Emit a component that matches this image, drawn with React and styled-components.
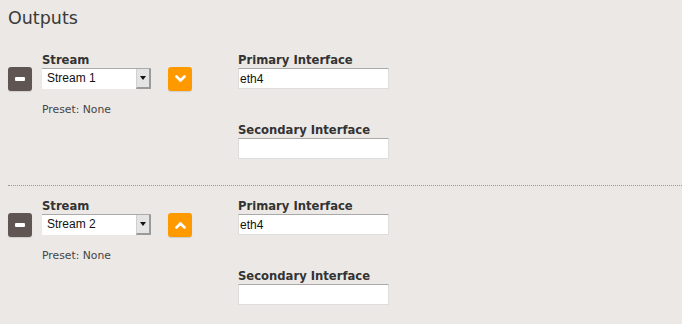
import styled, { createGlobalStyle } from "styled-components";

const GlobalStyle = createGlobalStyle`
  html, body {
    margin: 0;
    background: #ece8e6;
  }
  body {
    font-family: "DejaVu Sans", sans-serif;
    color: #333;
  }
`;

const Page = styled.div`
  padding: 6px 0 0 8px;
`;

const Title = styled.h2`
  margin: 0;
  font-size: 17.5px;
  line-height: 24px;
  font-weight: normal;
  color: #3a3a3a;
`;

const OutputRow = styled.div`
  display: flex;
  align-items: flex-start;
  padding: ${(p) => (p.$first ? "20px 0 26px" : "10px 0 25px")};
  border-top: ${(p) => (p.$first ? "none" : "1px dotted #999")};
`;

const IconButton = styled.button`
  width: 24px;
  height: 24px;
  margin-top: 17px;
  padding: 0;
  border: none;
  border-radius: 3px;
  background: ${(p) => p.$bg};
  box-shadow: 0 1px 1px rgba(0, 0, 0, 0.12);
  display: flex;
  align-items: center;
  justify-content: center;
  cursor: pointer;
`;

const MinusBar = styled.span`
  width: 10px;
  height: 4px;
  border-radius: 1px;
  background: #fff;
`;

const StreamColumn = styled.div`
  width: 109px;
  margin: 0 17px 0 10px;
`;

const InterfaceColumn = styled.div`
  width: 151px;
  margin-left: 46px;
`;

const Label = styled.div`
  height: 18px;
  font-size: 11.6px;
  font-weight: bold;
  line-height: 20px;
  color: #333;
  white-space: nowrap;
`;

const Select = styled.div`
  height: 21px;
  box-sizing: border-box;
  background: #fff;
  border-top: 1px solid #aaa;
  display: flex;
  align-items: stretch;
`;

const SelectText = styled.span`
  flex: 1;
  padding-left: 5px;
  font-family: "Liberation Sans", Arial, sans-serif;
  font-size: 12px;
  line-height: 19px;
  color: #111;
`;

const SelectArrow = styled.span`
  width: 12px;
  background: #e4e4e4;
  border-left: 1px solid #d0d0d0;
  border-right: 2px solid #9a9a9a;
  border-bottom: 2px solid #9a9a9a;
  display: flex;
  align-items: center;
  justify-content: center;

  &::after {
    content: "";
    border-left: 3px solid transparent;
    border-right: 3px solid transparent;
    border-top: 4px solid #111;
  }
`;

const Preset = styled.div`
  margin-top: 14px;
  font-size: 10.8px;
  line-height: 14px;
  color: #444;
`;

const TextInput = styled.input`
  display: block;
  width: 151px;
  height: 21px;
  box-sizing: border-box;
  margin: 0 0 ${(p) => (p.$spaced ? "31px" : "0")};
  padding: 0 1px;
  border: 1px solid #ddd;
  border-top-color: #a9a9a9;
  background: #fff;
  font-family: "Liberation Sans", Arial, sans-serif;
  font-size: 12px;
  color: #111;
  outline: none;
`;

function Chevron({ up }) {
  return (
    <svg width="11" height="8" viewBox="0 0 11 8">
      <path
        d={up ? "M1.5 6.5 L5.5 2.5 L9.5 6.5" : "M1.5 1.5 L5.5 5.5 L9.5 1.5"}
        fill="none"
        stroke="#fff"
        strokeWidth="2.6"
        strokeLinecap="round"
        strokeLinejoin="round"
      />
    </svg>
  );
}

const outputs = [
  { stream: "Stream 1", primary: "eth4", secondary: "", up: false },
  { stream: "Stream 2", primary: "eth4", secondary: "", up: true },
];

export default function App() {
  return (
    <Page>
      <GlobalStyle />
      <Title>Outputs</Title>
      {outputs.map((o, i) => (
        <OutputRow key={o.stream} $first={i === 0}>
          <IconButton $bg="#5f5553" aria-label="Remove">
            <MinusBar />
          </IconButton>
          <StreamColumn>
            <Label>Stream</Label>
            <Select>
              <SelectText>{o.stream}</SelectText>
              <SelectArrow />
            </Select>
            <Preset>Preset: None</Preset>
          </StreamColumn>
          <IconButton $bg="#ff9900" aria-label="Move">
            <Chevron up={o.up} />
          </IconButton>
          <InterfaceColumn>
            <Label>Primary Interface</Label>
            <TextInput defaultValue={o.primary} $spaced />
            <Label>Secondary Interface</Label>
            <TextInput defaultValue={o.secondary} />
          </InterfaceColumn>
        </OutputRow>
      ))}
    </Page>
  );
}
